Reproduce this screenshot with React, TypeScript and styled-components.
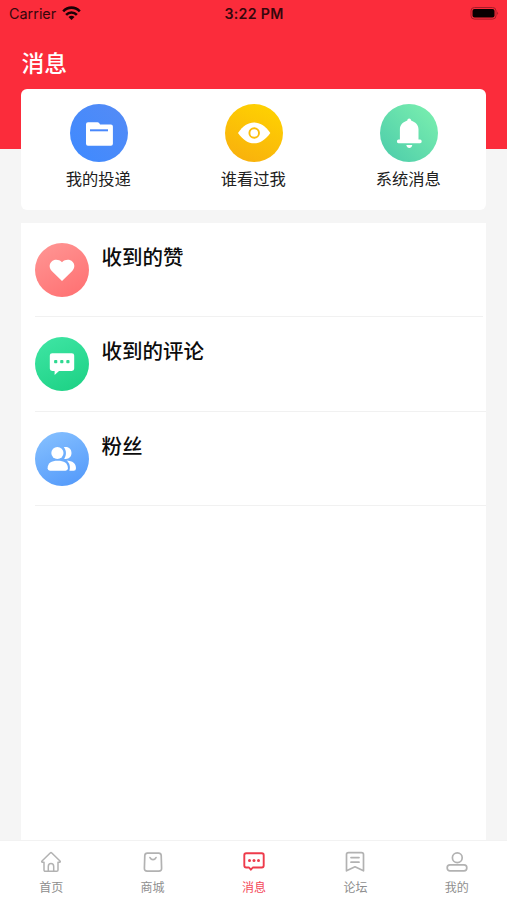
import React from "react";
import styled, { createGlobalStyle } from "styled-components";

const GlobalStyle = createGlobalStyle`
  * { box-sizing: border-box; }
  body {
    margin: 0;
    background: #f5f5f5;
    font-family: "Liberation Sans", "Noto Sans CJK SC", sans-serif;
  }
`;

const Screen = styled.div`
  width: 507px;
  height: 900px;
  display: flex;
  flex-direction: column;
  overflow: hidden;
  background: linear-gradient(#fb2c3b 149px, #f5f5f5 149px);
`;

const StatusBar = styled.header`
  height: 27px;
  flex: none;
  display: grid;
  grid-template-columns: 1fr auto 1fr;
  align-items: center;
  padding: 0 7px 0 9px;
  font: 400 14.4px/27px Inter, sans-serif;
  color: #35070c;
`;

const Carrier = styled.div`
  display: flex;
  align-items: center;
  gap: 6px;
`;

const Clock = styled.div`
  margin-left: -1px;
  font-weight: 600;
  font-size: 14.2px;
  letter-spacing: 0.3px;
`;

const BatteryBox = styled.div`
  display: flex;
  justify-content: flex-end;
`;

const Title = styled.h1`
  flex: none;
  height: 61.5px;
  margin: 0;
  padding: 20px 21.5px 0;
  font-size: 22.8px;
  line-height: 34px;
  font-weight: 500;
  color: #fff;
`;

const QuickCard = styled.section`
  flex: none;
  height: 121px;
  margin: 0 20.7px 0 21.3px;
  padding-top: 15px;
  display: grid;
  grid-template-columns: repeat(3, 1fr);
  background: #fff;
  border-radius: 6px;
`;

const QuickItem = styled.div`
  display: flex;
  flex-direction: column;
  align-items: center;
`;

const Circle = styled.div<{ $size: number; $fill: string }>`
  flex: none;
  width: ${(p) => p.$size}px;
  height: ${(p) => p.$size}px;
  border-radius: 50%;
  background: ${(p) => p.$fill};
  svg { display: block; width: 100%; height: 100%; }
`;

const QuickLabel = styled.div`
  margin-top: 5px;
  padding-right: 1px;
  font-size: 16.3px;
  line-height: 24px;
  color: #202020;
`;

const List = styled.main`
  flex: 1;
  margin: 13.5px 20.7px 0 21.3px;
  background: #fff;
`;

const Row = styled.div<{ $inset?: number }>`
  height: 94.4px;
  margin: 0 ${(p) => p.$inset ?? 0}px 0 13.3px;
  padding-top: 20px;
  display: flex;
  gap: 13px;
  border-bottom: 1px solid #f1f1f1;
`;

const RowTitle = styled.div`
  padding-top: 1px;
  font-size: 20.5px;
  line-height: 28px;
  font-weight: 500;
  color: #0c0c0c;
`;

const TabBar = styled.nav`
  flex: none;
  height: 60px;
  padding-top: 10px;
  display: grid;
  grid-template-columns: repeat(5, 1fr);
  background: #fff;
  border-top: 1px solid #f2f2f2;
`;

const Tab = styled.div<{ $active?: boolean }>`
  display: flex;
  flex-direction: column;
  align-items: center;
  padding-left: 1px;
  color: ${(p) => (p.$active ? "#ee3b4b" : "#b2b2b2")};
  svg { display: block; }
`;

const TabLabel = styled.span<{ $active?: boolean }>`
  margin-top: 6px;
  font-size: 12px;
  line-height: 18px;
  color: ${(p) => (p.$active ? "#f4485a" : "#8e8e8e")};
`;

const Wifi = () => (
  <svg width="19" height="15" viewBox="0 0 19 15" fill="none" stroke="#1b0206" strokeWidth="2.6">
    <path d="M1.2 5.3C6 .4 13 .4 17.8 5.3" />
    <path d="M4.1 8.8C7.2 5.7 11.8 5.7 14.9 8.8" />
    <path d="M6.5 11Q9.5 8.4 12.5 11L9.5 14Z" fill="#1b0206" stroke="none" />
  </svg>
);

const Battery = () => (
  <svg width="30" height="14" viewBox="0 0 30 14">
    <rect x="1" y=".5" width="25" height="11.6" rx="3.4" fill="none" stroke="#a61c28" strokeWidth="1" />
    <rect x="2.5" y="2" width="22" height="8.6" rx="2" fill="#080001" />
    <path d="M27.3 4.5q1.8 1.8 0 3.6Z" fill="#8d1823" />
  </svg>
);

const FolderIcon = () => (
  <svg viewBox="0 0 58 58">
    <path d="M18 18.2h9.5q1 0 1.6.9l1 1.4h10.8q2 0 2 2v17.2q0 2-2 2H18q-2 0-2-2V20.2q0-2 2-2Z" fill="#fff" />
    <path d="M20 26.3h18" stroke="#4888fc" strokeWidth="2" />
  </svg>
);

const EyeIcon = () => (
  <svg viewBox="0 0 58 58">
    <path d="M13 29C18 22 23 18.6 29 18.6S40.3 22 45.3 29C40.3 36 35 39.3 29 39.3S18 36 13 29Z" fill="#fff" />
    <circle cx="29.2" cy="29" r="4.8" fill="none" stroke="#fbbd0b" strokeWidth="1.9" />
  </svg>
);

const BellIcon = () => (
  <svg viewBox="0 0 58 58">
    <path d="M29.2 14.5c1.1 0 1.8.9 1.9 2 4.3 1.5 7.4 4.4 7.4 8.9v10.2h1.6q1.6 0 1.6 1.8T40.1 39.2H18.5q-1.6 0-1.6-1.8t1.6-1.8h1.4V25.4c0-4.5 3-7.4 7.4-8.9.1-1.1.8-2 1.9-2Z" fill="#fff" />
    <path d="M26.3 41h6q-.7 3-3 3t-3-3Z" fill="#fff" />
  </svg>
);

const HeartIcon = () => (
  <svg viewBox="0 0 54 54">
    <path d="M27 38 17 28.2c-3-3.1-3-7.1-.5-9.5 2.8-2.7 7.3-2.5 10.5.5 3.2-3 7.7-3.2 10.5-.5 2.5 2.4 2.5 6.4-.5 9.5Z" fill="#fff" />
  </svg>
);

const CommentIcon = () => (
  <svg viewBox="0 0 54 54">
    <path d="M17.2 16.2h19.6q2.4 0 2.4 2.4v13q0 2.4-2.4 2.4H24l-4.4 4V34h-2.4q-2.4 0-2.4-2.4v-13q0-2.4 2.4-2.4Z" fill="#fff" />
    <g fill="#2fd991">
      <rect x="19.1" y="23.1" width="3.2" height="3.2" rx=".8" />
      <rect x="25.2" y="23.1" width="3.2" height="3.2" rx=".8" />
      <rect x="31.3" y="23.1" width="3.2" height="3.2" rx=".8" />
    </g>
  </svg>
);

const FansIcon = () => (
  <svg viewBox="0 0 54 54" fill="#fff">
    <circle cx="22.4" cy="21" r="6.1" />
    <path d="M28.8 15.3c4.5-1.2 7.7 1.7 7.7 5.7 0 4.2-3.4 6.7-7.4 5.7 2.5-3.2 2.6-8-.3-11.4Z" />
    <path d="M12.6 36.3c0-5.2 3.8-7.5 10.1-7.5s10.2 2.3 10.2 7.5q0 2.4-2.4 2.4H15q-2.4 0-2.4-2.4Z" />
    <path d="M31.5 28.4c6.3.2 9.5 3 9.5 7.8q0 2.5-2.4 2.5h-4.2c1.3-4.4 0-8.2-2.9-10.3Z" />
  </svg>
);

const lineIcon = {
  width: 22,
  height: 22,
  viewBox: "0 0 22 22",
  fill: "none",
  stroke: "currentColor",
  strokeWidth: 1.7,
  strokeLinecap: "round",
  strokeLinejoin: "round",
} as const;

const HomeIcon = () => (
  <svg {...lineIcon} strokeWidth={1.5}>
    <path d="M4 11.2H2.2q-.9-.3-.2-1.2L10.2 2q.8-.7 1.6 0L20 10q.7.9-.2 1.2H18v7.7q0 1.3-1.3 1.3H5.3Q4 20.2 4 18.9Z" />
    <path d="M8.3 20v-4.5c0-3.9 5.4-3.9 5.4 0V20" />
  </svg>
);

const ShopIcon = () => (
  <svg {...lineIcon}>
    <path d="M5.3 2.2h11.4q2.3 0 2.5 2.3l.4 12.7q.1 2.9-2.8 2.9H5.2q-2.9 0-2.8-2.9l.4-12.7q.2-2.3 2.5-2.3Z" />
    <path d="M8 6.6c1.6 2.8 4.4 2.8 6 0" />
  </svg>
);

const MessageIcon = () => (
  <svg {...lineIcon} strokeWidth={1.9}>
    <path d="M3.2 2.3h15.6q1.9 0 1.9 1.9v10.4q0 1.9-1.9 1.9h-9l-1.9 2.2L6 16.5H3.2q-1.9 0-1.9-1.9V4.2q0-1.9 1.9-1.9Z" />
    <g fill="currentColor" stroke="none">
      <circle cx="6.5" cy="9.5" r="1.5" />
      <circle cx="11" cy="9.5" r="1.5" />
      <circle cx="15.5" cy="9.5" r="1.5" />
    </g>
  </svg>
);

const ForumIcon = () => (
  <svg {...lineIcon}>
    <path d="M4.5 1.6h13q2 0 2 2v16.2L11 15.8l-8.5 4V3.6q0-2 2-2Z" />
    <path d="M7 6.6h8M7 11.2h8" />
  </svg>
);

const ProfileIcon = () => (
  <svg {...lineIcon}>
    <circle cx="11.3" cy="6.7" r="4.9" />
    <rect x="1.2" y="13.9" width="19.6" height="6" rx="2.8" />
  </svg>
);

const quickItems = [
  { label: "我的投递", Icon: FolderIcon, fill: "linear-gradient(225deg, #558bf5, #3e8aff)" },
  { label: "谁看过我", Icon: EyeIcon, fill: "linear-gradient(205deg, #ffd500, #f8ad0e)" },
  { label: "系统消息", Icon: BellIcon, fill: "linear-gradient(225deg, #7df1af, #4bcbaa)" },
];

const rows = [
  { label: "收到的赞", Icon: HeartIcon, fill: "linear-gradient(150deg, #ff9795, #ff6e70)", inset: 3 },
  { label: "收到的评论", Icon: CommentIcon, fill: "linear-gradient(155deg, #40e6a5, #1bd083)" },
  { label: "粉丝", Icon: FansIcon, fill: "linear-gradient(155deg, #88c2ff, #5097fa)" },
];

const tabs = [
  { label: "首页", Icon: HomeIcon },
  { label: "商城", Icon: ShopIcon },
  { label: "消息", Icon: MessageIcon, active: true },
  { label: "论坛", Icon: ForumIcon },
  { label: "我的", Icon: ProfileIcon },
];

export default function App() {
  return (
    <>
      <GlobalStyle />
      <Screen>
        <StatusBar>
          <Carrier>Carrier<Wifi /></Carrier>
          <Clock>3:22 PM</Clock>
          <BatteryBox><Battery /></BatteryBox>
        </StatusBar>
        <Title>消息</Title>
        <QuickCard>
          {quickItems.map(({ label, Icon, fill }) => (
            <QuickItem key={label}>
              <Circle $size={58} $fill={fill}><Icon /></Circle>
              <QuickLabel>{label}</QuickLabel>
            </QuickItem>
          ))}
        </QuickCard>
        <List>
          {rows.map(({ label, Icon, fill, inset }) => (
            <Row key={label} $inset={inset}>
              <Circle $size={54} $fill={fill}><Icon /></Circle>
              <RowTitle>{label}</RowTitle>
            </Row>
          ))}
        </List>
        <TabBar>
          {tabs.map(({ label, Icon, active }) => (
            <Tab key={label} $active={active}>
              <Icon />
              <TabLabel $active={active}>{label}</TabLabel>
            </Tab>
          ))}
        </TabBar>
      </Screen>
    </>
  );
}
